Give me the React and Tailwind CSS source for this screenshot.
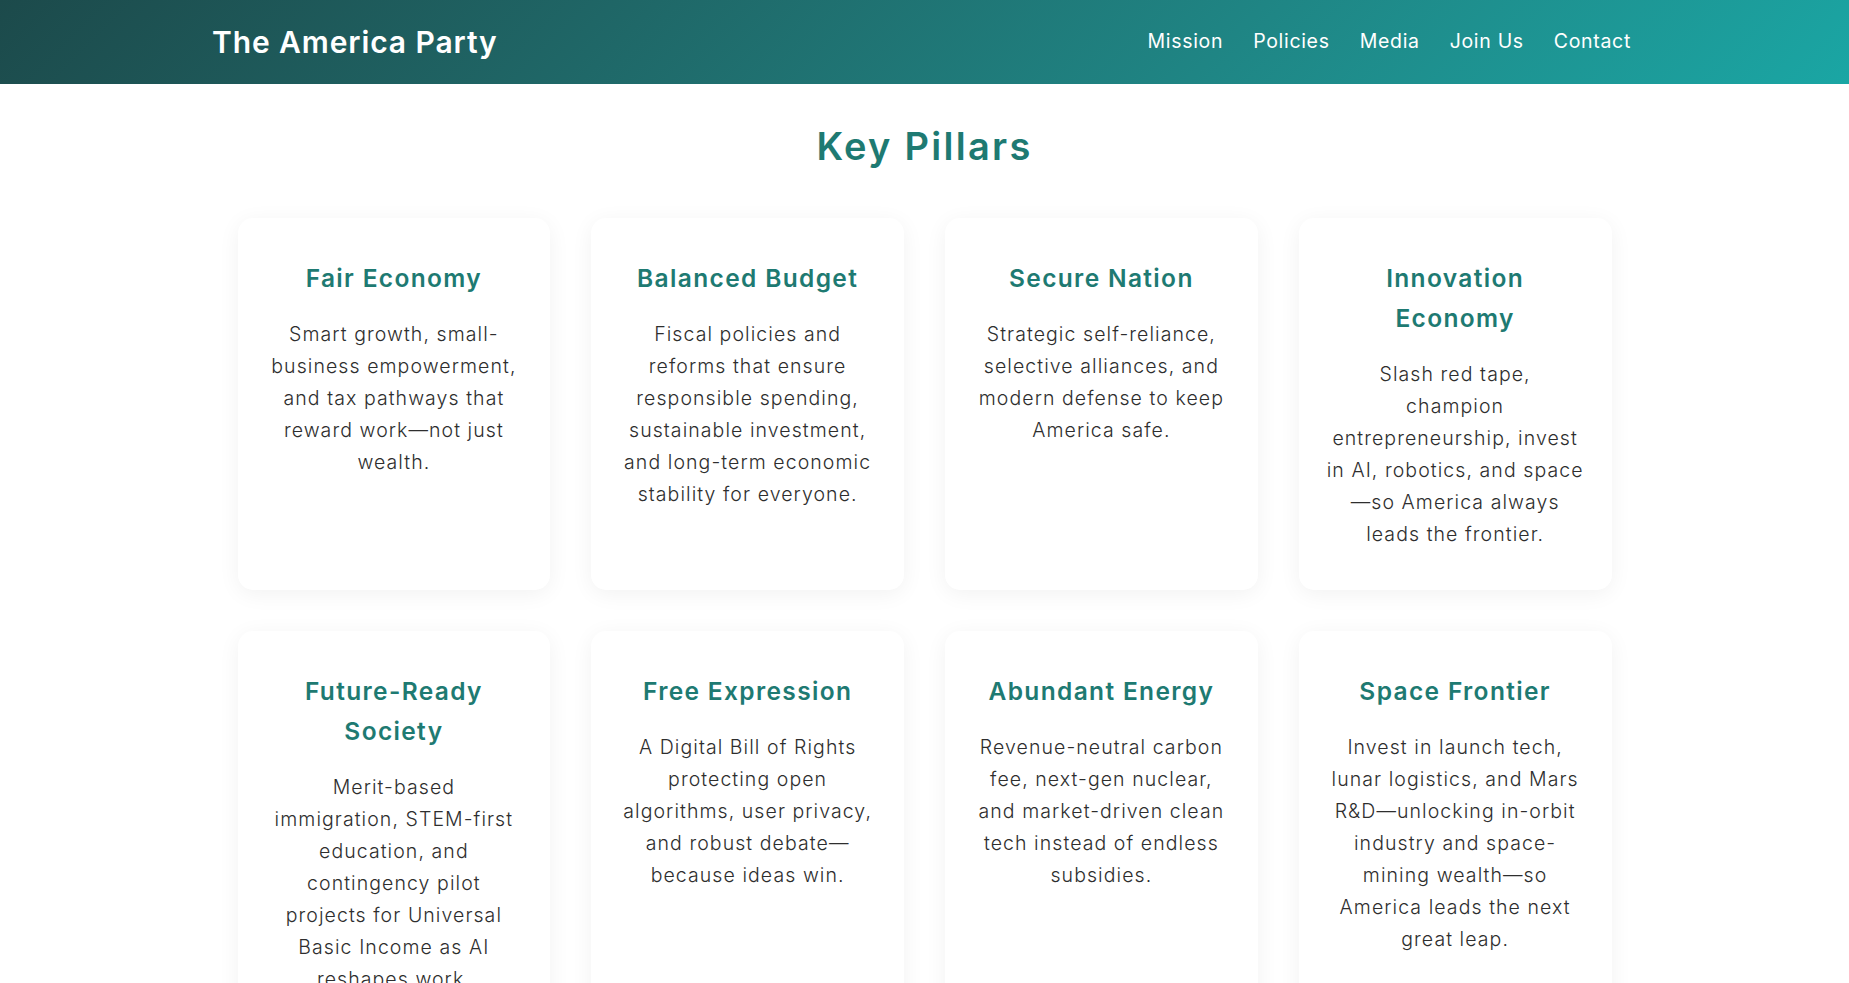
import React from "react";

const pillars = [
  {
    title: ["Fair Economy"],
    lines: [
      "Smart growth, small-",
      "business empowerment,",
      "and tax pathways that",
      "reward work—not just",
      "wealth.",
    ],
  },
  {
    title: ["Balanced Budget"],
    lines: [
      "Fiscal policies and",
      "reforms that ensure",
      "responsible spending,",
      "sustainable investment,",
      "and long-term economic",
      "stability for everyone.",
    ],
  },
  {
    title: ["Secure Nation"],
    lines: [
      "Strategic self-reliance,",
      "selective alliances, and",
      "modern defense to keep",
      "America safe.",
    ],
  },
  {
    title: ["Innovation", "Economy"],
    lines: [
      "Slash red tape,",
      "champion",
      "entrepreneurship, invest",
      "in AI, robotics, and space",
      "—so America always",
      "leads the frontier.",
    ],
  },
  {
    title: ["Future-Ready", "Society"],
    lines: [
      "Merit-based",
      "immigration, STEM-first",
      "education, and",
      "contingency pilot",
      "projects for Universal",
      "Basic Income as AI",
      "reshapes work.",
    ],
  },
  {
    title: ["Free Expression"],
    lines: [
      "A Digital Bill of Rights",
      "protecting open",
      "algorithms, user privacy,",
      "and robust debate—",
      "because ideas win.",
    ],
  },
  {
    title: ["Abundant Energy"],
    lines: [
      "Revenue-neutral carbon",
      "fee, next-gen nuclear,",
      "and market-driven clean",
      "tech instead of endless",
      "subsidies.",
    ],
  },
  {
    title: ["Space Frontier"],
    lines: [
      "Invest in launch tech,",
      "lunar logistics, and Mars",
      "R&D—unlocking in-orbit",
      "industry and space-",
      "mining wealth—so",
      "America leads the next",
      "great leap.",
    ],
  },
];

const navLinks = ["Mission", "Policies", "Media", "Join Us", "Contact"];

function PillarCard({ title, lines }) {
  return (
    <div className="rounded-[15px] bg-white px-5 pt-10 pb-10 text-center shadow-[0_4px_22px_rgba(0,0,0,0.055)]">
      <h3 className="mb-5 text-[24.5px] leading-[40px] font-semibold tracking-[0.055em] text-[#1e7a72]">
        {title.map((t) => (
          <span key={t} className="block whitespace-nowrap">
            {t}
          </span>
        ))}
      </h3>
      <p className="text-[19.5px] leading-[32px] font-[350] tracking-[0.055em] text-[#2e2e2e]">
        {lines.map((l) => (
          <span key={l} className="block whitespace-nowrap">
            {l}
          </span>
        ))}
      </p>
    </div>
  );
}

export default function App() {
  return (
    <div className="min-h-screen bg-white font-['Inter','Liberation_Sans',sans-serif]">
      <header className="h-[84px] bg-linear-135 from-[#1c4a4b] to-[#1aa6a4]">
        <div className="mx-auto flex h-full w-[1425px] items-center justify-between pr-[6px]">
          <a className="text-[30px] font-semibold tracking-[0.03em] text-white">
            The America Party
          </a>
          <nav className="flex items-center gap-[30px]">
            {navLinks.map((n) => (
              <a
                key={n}
                className="text-[19.5px] font-normal tracking-[0.035em] text-white"
              >
                {n}
              </a>
            ))}
          </nav>
        </div>
      </header>

      <main className="pt-[40px] pb-16">
        <h2 className="mb-[50px] text-center text-[38px] leading-[44px] font-semibold tracking-[0.06em] text-[#1e7a72]">
          Key Pillars
        </h2>
        <div className="mx-auto grid w-[1374px] grid-cols-4 gap-[41px]">
          {pillars.map((p) => (
            <PillarCard key={p.title.join(" ")} title={p.title} lines={p.lines} />
          ))}
        </div>
      </main>
    </div>
  );
}
